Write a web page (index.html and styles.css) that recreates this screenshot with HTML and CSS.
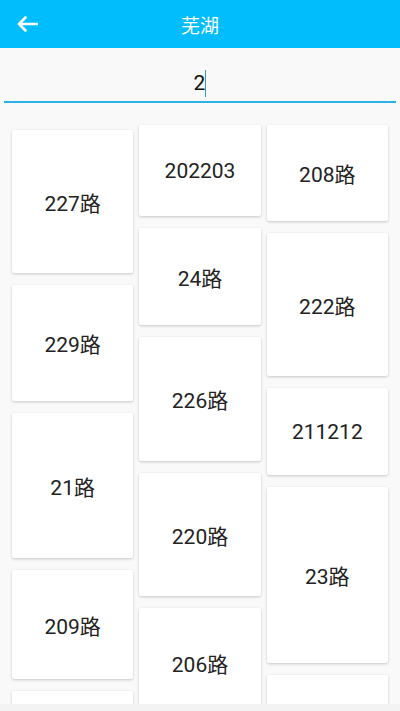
FILE: index.html
```html
<!DOCTYPE html>
<html lang="zh-CN">
<head>
    <meta charset="UTF-8">
    <title>芜湖</title>
    <link rel="stylesheet" href="styles.css">
</head>
<body>
    <div class="screen">
        <div class="toolbar">
            <span class="back">
                <svg width="22" height="16" viewBox="0 0 22 16">
                    <path d="M21 8H3M9.5 1.5L3 8l6.5 6.5" fill="none" stroke="#fff" stroke-width="2.6" stroke-linecap="round" stroke-linejoin="round"/>
                </svg>
            </span>
            <h1 class="title">芜湖</h1>
        </div>

        <div class="search">
            <div class="search-field"><span>2</span><span class="caret"></span></div>
        </div>

        <div class="list">
            <div class="column first">
                <div class="card" style="height: 143px">227路</div>
                <div class="card" style="height: 116px">229路</div>
                <div class="card" style="height: 145px">21路</div>
                <div class="card" style="height: 109px">209路</div>
                <div class="card" style="height: 90px"></div>
            </div>
            <div class="column">
                <div class="card" style="height: 91px">202203</div>
                <div class="card" style="height: 97px">24路</div>
                <div class="card" style="height: 124px">226路</div>
                <div class="card" style="height: 123px">220路</div>
                <div class="card" style="height: 110px">206路</div>
            </div>
            <div class="column">
                <div class="card" style="height: 96px">208路</div>
                <div class="card" style="height: 143px">222路</div>
                <div class="card" style="height: 87px">211212</div>
                <div class="card" style="height: 176px">23路</div>
                <div class="card" style="height: 74px"></div>
            </div>
        </div>
    </div>
</body>
</html>
```

FILE: styles.css
```css
body {
    margin: 0;
    background-color: #f3f3f3;
    font-family: Roboto, "Noto Sans CJK SC", sans-serif;
    color: #222;
}

.screen {
    height: 704px;
    display: flex;
    flex-direction: column;
    background-color: #f9f9f9;
    overflow: hidden;
}

.toolbar {
    height: 48px;
    flex-shrink: 0;
    background-color: #02bdfc;
    display: flex;
    align-items: center;
    position: relative;
}

.back {
    display: flex;
    padding-left: 16px;
}

.title {
    position: absolute;
    left: 0;
    right: 0;
    margin: 0;
    text-align: center;
    color: #fff;
    font-size: 19px;
    font-weight: normal;
    font-family: "Noto Sans CJK SC", sans-serif;
}

.search {
    padding: 23px 4px 0;
}

.search-field {
    height: 30px;
    border-bottom: 2px solid #29b3ea;
    display: flex;
    justify-content: center;
    align-items: flex-start;
    font-size: 21px;
    color: #111;
}

.caret {
    width: 1px;
    height: 27px;
    margin-top: -1px;
    background-color: #2c9ad8;
}

.list {
    display: flex;
    gap: 6px;
    padding: 22px 12px 0;
}

.column {
    flex: 1;
    display: flex;
    flex-direction: column;
    gap: 12px;
}

.column.first {
    padding-top: 5px;
}

.card {
    flex-shrink: 0;
    background-color: #fff;
    border-radius: 2px;
    box-shadow: 0 1px 3px rgba(0, 0, 0, 0.2);
    display: flex;
    align-items: center;
    justify-content: center;
    font-size: 21px;
    color: #222;
}
```
